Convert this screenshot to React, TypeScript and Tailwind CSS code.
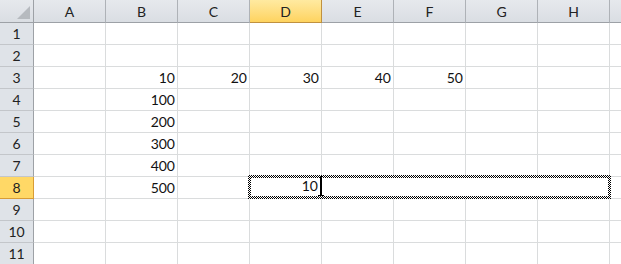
import React from "react";

const cols = ["A", "B", "C", "D", "E", "F", "G", "H", ""];
const data: Record<string, string> = {
  "3-B": "10",
  "3-C": "20",
  "3-D": "30",
  "3-E": "40",
  "3-F": "50",
  "4-B": "100",
  "5-B": "200",
  "6-B": "300",
  "7-B": "400",
  "8-B": "500",
};

export default function App() {
  const rows = Array.from({ length: 11 }, (_, i) => i + 1);
  return (
    <div
      className="relative w-[621px] h-[264px] overflow-hidden bg-white text-[14px] text-[#111]"
      style={{ fontFamily: "Lato, 'Liberation Sans', sans-serif" }}
    >
      <div className="grid grid-cols-[34px_repeat(9,72px)] grid-rows-[23px_repeat(11,22px)]">
        {/* corner */}
        <div className="flex items-end justify-end p-[3px] border-r border-b border-[#9da1a6] bg-gradient-to-b from-[#e6e9ed] to-[#dadee3]">
          <div className="w-0 h-0 border-l-[13px] border-l-transparent border-b-[13px] border-b-[#b6babf]" />
        </div>
        {cols.map((c, i) => (
          <div
            key={c + i}
            className={
              c === "D"
                ? "flex items-center justify-center border-r border-b border-[#c0913f] bg-gradient-to-b from-[#ffeaa0] to-[#fed35e] text-[#222]"
                : "flex items-center justify-center border-r border-b border-r-[#aeb2b7] border-b-[#9da1a6] bg-gradient-to-b from-[#e6e9ed] to-[#dadee3] text-[#222]"
            }
          >
            {c}
          </div>
        ))}
        {rows.map((r) => (
          <React.Fragment key={r}>
            <div
              className={
                r === 8
                  ? "flex items-center justify-center border-r border-b border-[#d89c35] bg-[#ffd866] text-[#222]"
                  : "flex items-center justify-center border-r border-b border-r-[#9da1a6] border-b-[#c3c6ca] bg-[#dfe3e8] text-[#222]"
              }
            >
              {r}
            </div>
            {cols.map((c, i) => (
              <div
                key={c + i}
                className="flex items-end justify-end border-r border-b border-[#dadcdd] pr-[2px] pb-[1px] leading-[18px]"
              >
                {data[`${r}-${c}`] ?? ""}
              </div>
            ))}
          </React.Fragment>
        ))}
      </div>

      {/* active edit cell with hatched border (overlays the grid) */}
      <div className="absolute left-[248px] top-[175px] w-[363px] h-[24px] p-[3px] [background-image:repeating-conic-gradient(#000_0_25%,#fff_0_50%)] [background-size:2px_2px]">
        <div className="flex items-end w-full h-full bg-white">
          <div className="w-[67px] text-right leading-[18px] pb-[1px]">10</div>
          <div className="flex flex-col items-center self-stretch -mt-[2px]">
            <div className="w-[2px] flex-1 bg-black" />
            <div className="w-[6px] h-[1px] bg-black" />
          </div>
        </div>
      </div>
    </div>
  );
}
